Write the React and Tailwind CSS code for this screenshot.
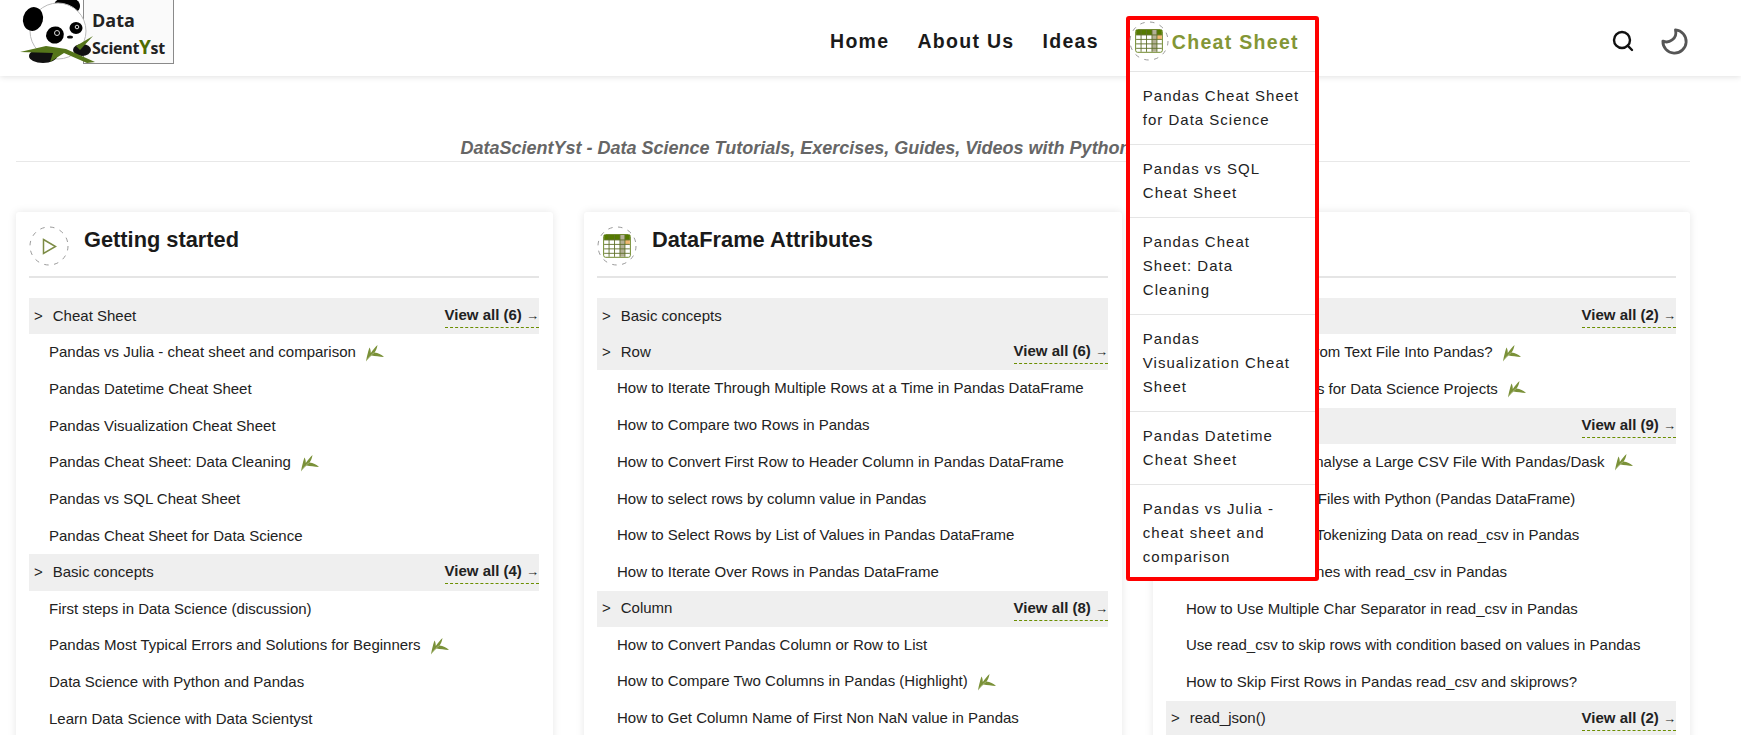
import React from "react";
import { Search } from "lucide-react";

const sans = "font-['Liberation_Sans',Arial,sans-serif]";

// Small tea leaf shown next to highlighted articles
const Leaf = () => (
  <svg width="20" height="18" viewBox="0 0 20 18" className="ml-[9px] shrink-0">
    <path d="M1 17.5 C2 12 3.5 6 4.5 3.5 C5.5 5 5.8 7 5.8 9 C8 6 10 3 12.5 1 C12 4 11 6.5 9.5 8.5 C13 9 16.5 10.5 19 13 C14.5 12.5 10 12 6.5 11.5 C4.5 13 2.5 15 1 17.5 Z" fill="#7a9138" />
    <path d="M2 16 C4 13 7 10 9.5 8.5" stroke="#b4c28d" strokeWidth="0.7" fill="none" />
  </svg>
);

// Dashed ring around the section icons
const Ring = ({ children }) => (
  <div className="relative w-[40px] h-[40px] shrink-0 flex items-center justify-center">
    <svg width="40" height="40" viewBox="0 0 40 40" className="absolute inset-0">
      <circle cx="20" cy="20" r="19" fill="none" stroke="#8f8f8f" strokeWidth="0.9" strokeDasharray="4.5 5.5" />
    </svg>
    {children}
  </div>
);

const TableIcon = ({ size = 28 }) => (
  <svg width={size} height={size * 0.85} viewBox="0 0 28 24" className="relative">
    <rect x="0.5" y="0.5" width="27" height="23" rx="2" fill="#fff" stroke="#6f8a2c" />
    <rect x="1" y="1" width="26" height="5" fill="#557a00" />
    <rect x="17" y="1" width="5" height="22" fill="#b3b096" />
    <rect x="22" y="6" width="5" height="4.5" fill="#f2b872" />
    <path d="M6 1V23M11.5 1V23M17 1V23M22 1V23M1 6H27M1 10.5H27M1 15H27M1 19.5H27" stroke="#5f6f2a" strokeWidth="0.9" fill="none" />
  </svg>
);

const PlayIcon = () => (
  <svg width="15" height="17" viewBox="0 0 15 17" className="relative mt-[1px]">
    <path d="M1.5 1.5 L13.5 8.5 L1.5 15.5 Z" fill="none" stroke="#7d8c46" strokeWidth="1.5" />
  </svg>
);

const Moon = () => (
  <svg width="28" height="27" viewBox="0 0 30 29">
    <path d="M15.5 2 A12.5 12.5 0 1 1 2 14 C8 17 18 12 15.5 2 Z" fill="none" stroke="#555" strokeWidth="3" strokeLinejoin="round" />
  </svg>
);

const Logo = () => (
  <div className="flex items-start ml-[20px] h-[64px]">
    <svg width="76" height="64" viewBox="0 0 76 64" className="relative z-10 -mr-[13px] shrink-0">
      <ellipse cx="47" cy="6" rx="13" ry="9" fill="#000" />
      <circle cx="38" cy="31" r="28" fill="#fff" stroke="#bbb" />
      <ellipse cx="13" cy="19" rx="10" ry="12" transform="rotate(15 13 19)" fill="#000" />
      <ellipse cx="35" cy="35" rx="9" ry="8.5" fill="#000" transform="rotate(-25 35 35)" />
      <ellipse cx="56" cy="28" rx="6.5" ry="6" fill="#000" />
      <circle cx="37" cy="33" r="2.5" fill="none" stroke="#ddd" />
      <circle cx="57" cy="27" r="1.8" fill="none" stroke="#ddd" />
      <ellipse cx="50" cy="37" rx="3" ry="1.6" fill="#111" />
      <ellipse cx="23" cy="56" rx="14" ry="7" fill="#111" />
      <ellipse cx="62" cy="50" rx="9" ry="6" fill="#111" />
      <path d="M0 52 L26 46 L46 49 L75 62 L67 63 L44 53 L30 62 L33 53 Z" fill="#55751a" />
      <path d="M56 46 L73 36 L60 50 Z" fill="#55751a" />
    </svg>
    <div className="w-[91px] h-[64px] bg-[#fafafa] border-r border-b border-l border-[#8a8a8a] pl-[8px] pt-[9px] font-['Open_Sans',sans-serif] font-bold text-[#222]">
      <div className="text-[18px] leading-[22px]">Data</div>
      <div className="text-[16px] leading-[22px] mt-[5px] tracking-[-0.3px] whitespace-nowrap">
        Scient<span className="text-[#4f6b00] text-[19px]">Y</span>st
      </div>
    </div>
  </div>
);

const cheatLinks = [
  ["Pandas Cheat Sheet", "for Data Science"],
  ["Pandas vs SQL", "Cheat Sheet"],
  ["Pandas Cheat", "Sheet: Data", "Cleaning"],
  ["Pandas", "Visualization Cheat", "Sheet"],
  ["Pandas Datetime", "Cheat Sheet"],
  ["Pandas vs Julia -", "cheat sheet and", "comparison"],
];

const CheatMenu = () => (
  <div className="absolute left-0 top-[16px] z-20 w-[193px] h-[565px] bg-white border-4 border-[#ff0000] rounded-[3px]">
    <div className="flex items-center h-[52px] pb-[9px] border-b border-[#e5e5e5]">
      <div className="-ml-[1px]">
        <Ring>
          <TableIcon />
        </Ring>
      </div>
      <span className="ml-[3px] mt-[4px] text-[19.5px] font-bold tracking-[1.3px] text-[#839636] whitespace-nowrap">Cheat Sheet</span>
    </div>
    {cheatLinks.map((lines, i) => (
      <div key={i} className="pl-[13px] py-[12px] border-b border-[#e5e5e5] last:border-b-0 text-[15px] font-normal leading-[24px] tracking-[1px] text-[#222] whitespace-nowrap">
        {lines.map((line) => (
          <div key={line}>{line}</div>
        ))}
      </div>
    ))}
  </div>
);

const Header = () => (
  <header className="flex items-start h-[76px] bg-white shadow-[0_1px_6px_rgba(0,0,0,0.12)] relative">
    <Logo />
    <nav className="flex items-center h-[83px] ml-[656px] text-[19.5px] font-bold tracking-[1.3px] text-[#1a1a1a]">
      <span className="mr-[28px]">Home</span>
      <span className="mr-[28px]">About Us</span>
      <span>Ideas</span>
      <div className="relative ml-[27px] w-[193px] self-stretch">
        <CheatMenu />
      </div>
    </nav>
    <div className="flex items-center h-[82px] ml-[292px]">
      <Search size={24} strokeWidth={2.4} color="#111" />
      <div className="ml-[26px]">
        <Moon />
      </div>
    </div>
  </header>
);

const Row = ({ text, leaf }) => (
  <div className="flex items-center h-[36.7px] pl-[20px] text-[15px] text-[#222] whitespace-nowrap">
    <span>{text}</span>
    {leaf && <Leaf />}
  </div>
);

const Group = ({ text, count }) => (
  <div className="flex items-center justify-between h-[36.2px] bg-[#efefef] pl-[5px] text-[15px] text-[#222] whitespace-nowrap">
    <span>
      <span className="mr-[10px]">&gt;</span>
      {text}
    </span>
    {count && (
      <span className="self-start h-[30px] leading-[34px] font-bold border-b border-dashed border-[#6b8e00]">
        View all ({count}) <span className="font-normal text-[13px]">→</span>
      </span>
    )}
  </div>
);

const Card = ({ icon, title, rows }) => (
  <section className="bg-white rounded-[3px] shadow-[0_0_8px_rgba(0,0,0,0.1)] pl-[13px] pr-[14px] pt-[14px] h-[600px]">
    <div className="flex items-start gap-[15px] pb-[10px] border-b-2 border-[#e5e5e5]">
      <Ring>{icon}</Ring>
      <h2 className="text-[21.8px] leading-[28px] font-bold text-[#1a1a1a]">{title}</h2>
    </div>
    <div className="mt-[20px]">
      {rows.map((r, i) =>
        r.group ? <Group key={i} text={r.group} count={r.count} /> : <Row key={i} text={r.text} leaf={r.leaf} />
      )}
    </div>
  </section>
);

const gettingStarted = [
  { group: "Cheat Sheet", count: 6 },
  { text: "Pandas vs Julia - cheat sheet and comparison", leaf: true },
  { text: "Pandas Datetime Cheat Sheet" },
  { text: "Pandas Visualization Cheat Sheet" },
  { text: "Pandas Cheat Sheet: Data Cleaning", leaf: true },
  { text: "Pandas vs SQL Cheat Sheet" },
  { text: "Pandas Cheat Sheet for Data Science" },
  { group: "Basic concepts", count: 4 },
  { text: "First steps in Data Science (discussion)" },
  { text: "Pandas Most Typical Errors and Solutions for Beginners", leaf: true },
  { text: "Data Science with Python and Pandas" },
  { text: "Learn Data Science with Data Scientyst" },
];

const dataFrame = [
  { group: "Basic concepts" },
  { group: "Row", count: 6 },
  { text: "How to Iterate Through Multiple Rows at a Time in Pandas DataFrame" },
  { text: "How to Compare two Rows in Pandas" },
  { text: "How to Convert First Row to Header Column in Pandas DataFrame" },
  { text: "How to select rows by column value in Pandas" },
  { text: "How to Select Rows by List of Values in Pandas DataFrame" },
  { text: "How to Iterate Over Rows in Pandas DataFrame" },
  { group: "Column", count: 8 },
  { text: "How to Convert Pandas Column or Row to List" },
  { text: "How to Compare Two Columns in Pandas (Highlight)", leaf: true },
  { text: "How to Get Column Name of First Non NaN value in Pandas" },
];

const inputOutput = [
  { group: "Basic concepts", count: 2 },
  { text: "How to Load Data from Text File Into Pandas?", leaf: true },
  { text: "Best Public Datasets for Data Science Projects", leaf: true },
  { group: "read_csv()", count: 9 },
  { text: "How to Read and Analyse a Large CSV File With Pandas/Dask", leaf: true },
  { text: "How to Read Many Files with Python (Pandas DataFrame)" },
  { text: "How to Solve Error Tokenizing Data on read_csv in Pandas" },
  { text: "How to Drop Bad Lines with read_csv in Pandas" },
  { text: "How to Use Multiple Char Separator in read_csv in Pandas" },
  { text: "Use read_csv to skip rows with condition based on values in Pandas" },
  { text: "How to Skip First Rows in Pandas read_csv and skiprows?" },
  { group: "read_json()", count: 2 },
];

export default function App() {
  return (
    <div className={`h-[735px] overflow-hidden bg-white ${sans}`}>
      <Header />
      <div className="mx-[16px] w-[1674px] pt-[59px]">
        <p className="text-center pr-[115px] text-[18px] leading-[26px] font-bold italic text-[#666]">
          DataScientYst - Data Science Tutorials, Exercises, Guides, Videos with Python
        </p>
        <hr className="border-[#e8e8e8]" />
      </div>
      <main className="grid grid-cols-[537px_538px_537px] gap-[31px] ml-[16px] w-[1674px] mt-[50px]">
        <Card icon={<PlayIcon />} title="Getting started" rows={gettingStarted} />
        <Card icon={<TableIcon />} title="DataFrame Attributes" rows={dataFrame} />
        <Card icon={<TableIcon />} title="Input" rows={inputOutput} />
      </main>
    </div>
  );
}
